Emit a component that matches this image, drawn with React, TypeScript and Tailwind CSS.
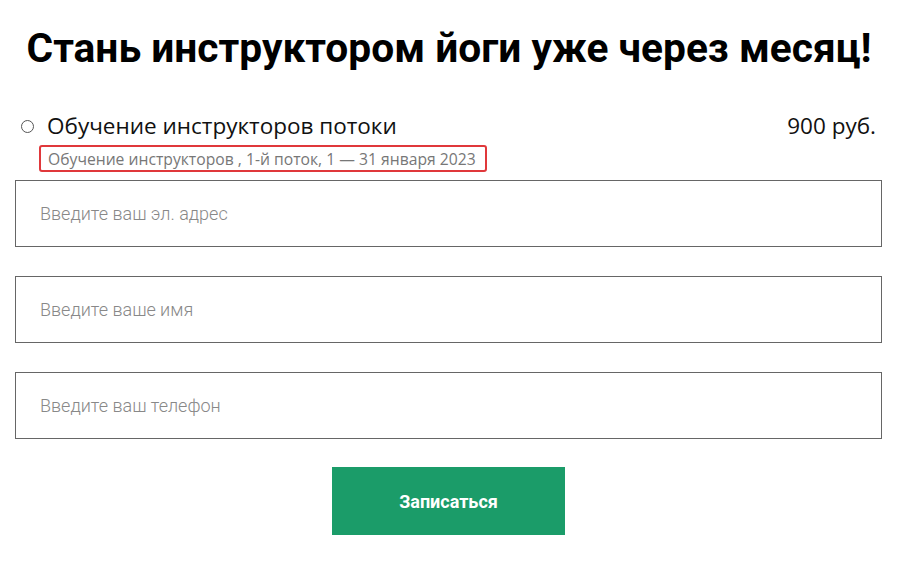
export default function App() {
  const fields = ['Введите ваш эл. адрес', 'Введите ваше имя', 'Введите ваш телефон'];
  return (
    <div className="w-[898px] h-[565px] bg-white font-['Roboto',sans-serif]">
      <h1 className="pt-[24px] text-center text-[40.7px] leading-[48px] font-bold text-black">
        Стань инструктором йоги уже через месяц!
      </h1>

      <div className="mt-[39px] pl-[21px] pr-[22px] font-['Open_Sans',sans-serif]">
        <div className="flex items-center justify-between">
          <label className="flex items-center gap-[13px]">
            <span className="w-[13px] h-[13px] rounded-full border border-[#555] bg-white" />
            <span className="text-[22.5px] leading-[30px] text-[#111]">Обучение инструкторов потоки</span>
          </label>
          <span className="text-[22.5px] leading-[30px] text-[#111]">900 руб.</span>
        </div>
        <div className="mt-[4px] ml-[18px] w-[448px] h-[27px] border-2 border-[#e0383b] rounded-[3px] flex items-center pl-[7px]">
          <span className="text-[15.7px] leading-[20px] text-[#777]">
            Обучение инструкторов , 1-й поток, 1 — 31 января 2023
          </span>
        </div>
      </div>

      <form className="mt-[8px] px-[15px] flex flex-col gap-[29px]">
        {fields.map((f) => (
          <input
            key={f}
            placeholder={f}
            className="w-[867px] h-[67px] border border-[#666] px-[24px] text-[18px] font-light text-[#333] placeholder:text-[#888] outline-none"
          />
        ))}
      </form>

      <div className="mt-[28px] flex justify-center">
        <button className="ml-[-1px] w-[233px] h-[68px] bg-[#1b9c69] text-white text-[18px] font-bold">
          Записаться
        </button>
      </div>
    </div>
  );
}
